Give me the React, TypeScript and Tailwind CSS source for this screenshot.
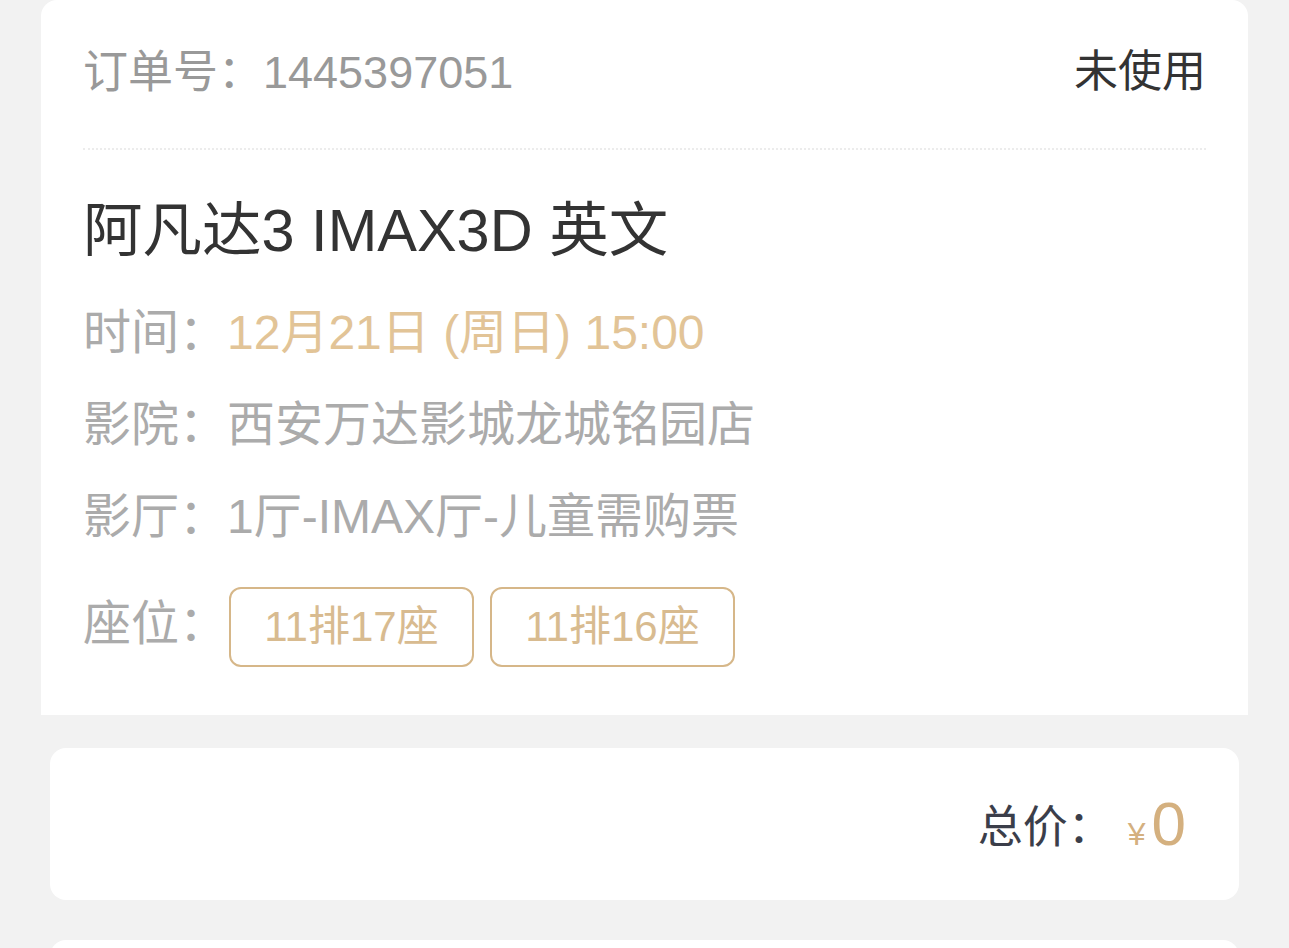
import React from "react";

const font = { fontFamily: '"Liberation Sans", "Noto Sans CJK SC", sans-serif' };

function Row({ label, children }: { label: string; children: React.ReactNode }) {
  return (
    <div className="flex items-center text-[48px] leading-none">
      <span className="text-[#ababab]">{label}</span>
      {children}
    </div>
  );
}

function Seat({ text }: { text: string }) {
  return (
    <div className="flex h-[80px] w-[245px] items-center justify-center rounded-[12px] border-2 border-[#d6b789] text-[42px] leading-none text-[#d8bb90]">
      {text}
    </div>
  );
}

export default function App() {
  return (
    <div className="min-h-[948px] w-full overflow-hidden bg-[#f2f2f2]" style={font}>
      <div className="mx-[41px] rounded-t-[16px] bg-white pb-[48px] pl-[42px] pr-[42px]">
        <div className="flex h-[150px] items-center justify-between border-b-2 border-dotted border-[#ececec] pb-[4px]">
          <span className="text-[45px] leading-none text-[#999999]">订单号：1445397051</span>
          <span className="text-[44px] leading-none text-[#333333]">未使用</span>
        </div>
        <div className="mt-[51px] text-[59.5px] leading-none text-[#333333]">阿凡达3 IMAX3D 英文</div>
        <div className="mt-[48px] flex flex-col gap-[44px]">
          <Row label="时间：">
            <span className="text-[#e2c497]">12月21日 (周日) 15:00</span>
          </Row>
          <Row label="影院：">
            <span className="text-[#ababab]">西安万达影城龙城铭园店</span>
          </Row>
          <Row label="影厅：">
            <span className="text-[#ababab]">1厅-IMAX厅-儿童需购票</span>
          </Row>
        </div>
        <div className="mt-[46px] flex items-center">
          <span className="-mt-[6px] text-[48px] leading-none text-[#ababab]">座位：</span>
          <div className="ml-[2px] flex gap-[16px]">
            <Seat text="11排17座" />
            <Seat text="11排16座" />
          </div>
        </div>
      </div>
      <div className="mx-[50px] mt-[33px] flex h-[152px] items-center justify-end rounded-[16px] bg-white pr-[53px]">
        <span className="mt-[8px] text-[45px] leading-none text-[#3b3e4a]">总价：</span>
        <span className="ml-[15px] flex items-baseline text-[#d4b07f]">
          <span className="text-[32px] leading-none">¥</span>
          <span className="ml-[6px] text-[62px] leading-none">0</span>
        </span>
      </div>
      <div className="mx-[50px] mt-[40px] h-[60px] rounded-t-[16px] bg-white"></div>
    </div>
  );
}
